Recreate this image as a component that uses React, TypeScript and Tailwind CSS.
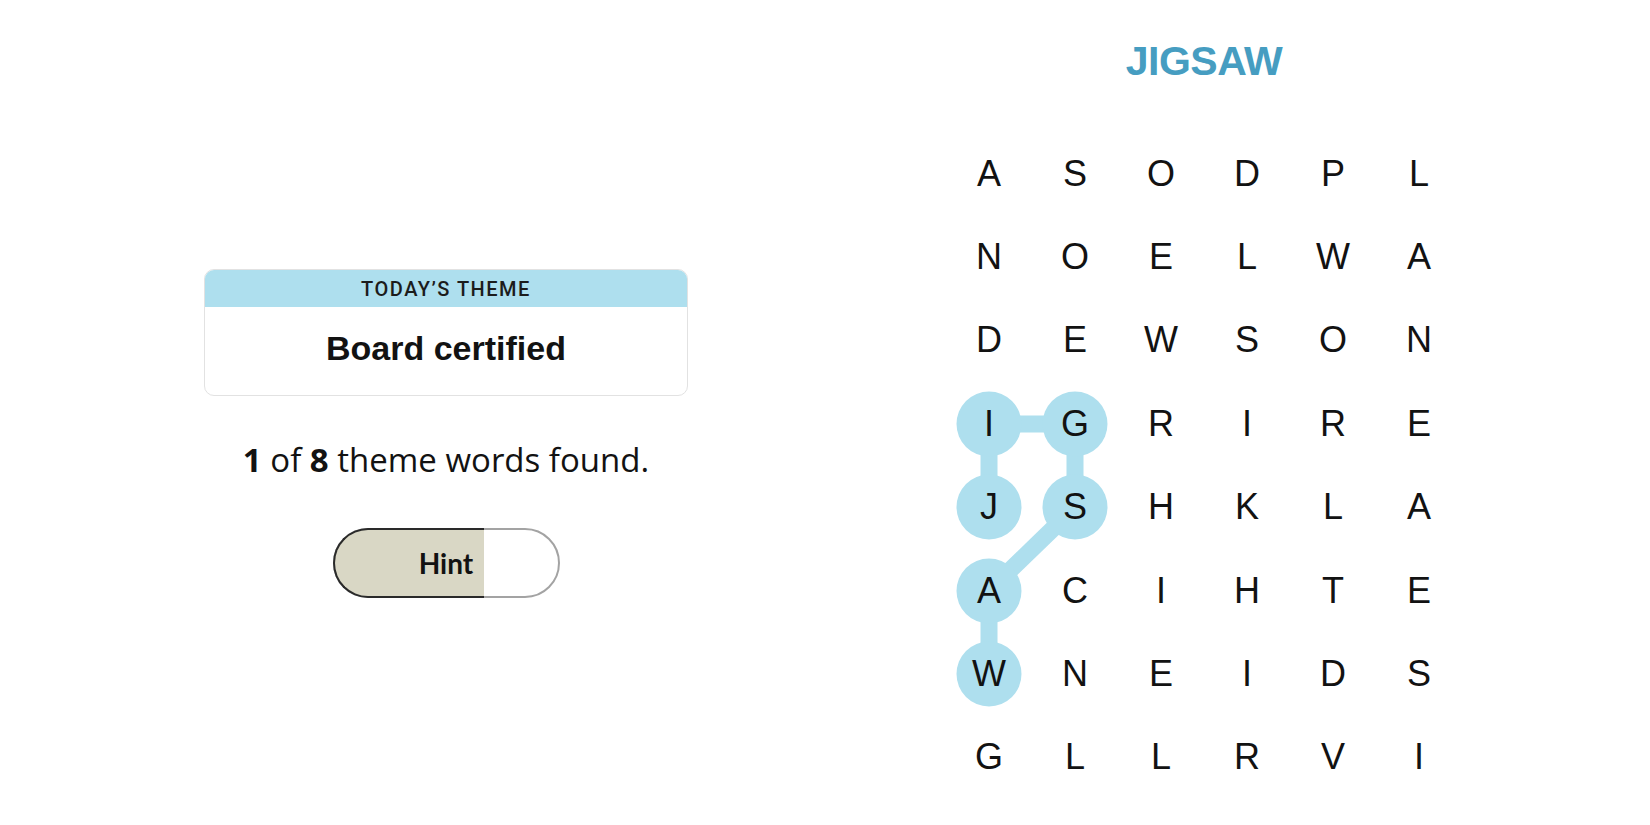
import React from "react";

const ROWS = ["ASODPL", "NOELWA", "DEWSON", "IGRIRE", "JSHKLA", "ACIHTE", "WNEIDS", "GLLRVI"];
const PATH: [number, number][] = [
  [4, 0],
  [3, 0],
  [3, 1],
  [4, 1],
  [5, 0],
  [6, 0],
];
const CW = 86;
const RH = 83.4;
const HL = new Set(PATH.map(([r, c]) => `${r}-${c}`));

export default function App() {
  return (
    <div className="w-[1650px] h-[825px] bg-white flex pl-[204px] gap-[258px] overflow-hidden">
      {/* Left column */}
      <div className="w-[484px] flex flex-col items-center pt-[269px]">
        <div className="w-full h-[127px] rounded-[10px] border border-[#e2e2e2] overflow-hidden flex flex-col">
          <div className="h-[37px] bg-[#aedfee] flex items-center justify-center">
            <span
              className="text-[20px] font-medium tracking-[0.075em] text-[#1c1c1c] leading-none"
              style={{ fontFamily: "Roboto, 'Liberation Sans', sans-serif" }}
            >
              TODAY’S THEME
            </span>
          </div>
          <div className="flex-1 flex items-center justify-center pb-[6px]">
            <span
              className="text-[34px] font-bold text-[#121212] leading-none"
              style={{ fontFamily: "'Liberation Sans', Arial, sans-serif" }}
            >
              Board certified
            </span>
          </div>
        </div>
        <p
          className="mt-[47px] text-[33px] leading-[33px] text-[#121212] whitespace-nowrap"
          style={{ fontFamily: "'Open Sans', sans-serif" }}
        >
          <span className="font-bold">1</span> of <span className="font-bold">8</span> theme words found.
        </p>
        <button className="relative mt-[52px] w-[227px] h-[70px] rounded-full border-2 border-[#a3a3a3] bg-white flex items-center justify-center">
          <div className="absolute -left-[2px] -top-[2px] -bottom-[2px] w-[151px] rounded-l-full border-2 border-r-0 border-[#2a2a2a] bg-[#d9d7c5]" />
          <span
            className="relative text-[28px] font-bold text-[#121212] leading-none"
            style={{ fontFamily: "Lato, sans-serif" }}
          >
            Hint
          </span>
        </button>
      </div>

      {/* Right column */}
      <div className="w-[516px] flex flex-col items-center pt-[37px]">
        <h1
          className="text-[41px] leading-[48px] font-bold tracking-[-0.5px] text-[#469dc1]"
          style={{ fontFamily: "'Liberation Sans', Arial, sans-serif" }}
        >
          JIGSAW
        </h1>
        <div className="relative mt-[47px]">
          <svg
            className="absolute inset-0"
            width={CW * 6}
            height={RH * 8}
            viewBox={`0 0 ${CW * 6} ${RH * 8}`}
          >
            {PATH.slice(1).map(([r, c], i) => {
              const [pr, pc] = PATH[i];
              return (
                <line
                  key={i}
                  x1={CW / 2 + CW * pc}
                  y1={RH / 2 + RH * pr}
                  x2={CW / 2 + CW * c}
                  y2={RH / 2 + RH * r}
                  stroke="#aedfee"
                  strokeWidth={17}
                />
              );
            })}
          </svg>
          <div className="relative grid grid-cols-[repeat(6,86px)]">
            {ROWS.map((row, r) =>
              row.split("").map((ch, c) => (
                <div key={`${r}-${c}`} className="relative h-[83.4px] flex items-center justify-center">
                  {HL.has(`${r}-${c}`) && (
                    <div className="absolute left-1/2 top-1/2 -translate-x-1/2 -translate-y-1/2 w-[65px] h-[65px] rounded-full bg-[#aedfee]" />
                  )}
                  <span
                    className="relative text-[36px] leading-none text-[#121212]"
                    style={{ fontFamily: "'Liberation Sans', Arial, sans-serif" }}
                  >
                    {ch}
                  </span>
                </div>
              ))
            )}
          </div>
        </div>
      </div>
    </div>
  );
}
